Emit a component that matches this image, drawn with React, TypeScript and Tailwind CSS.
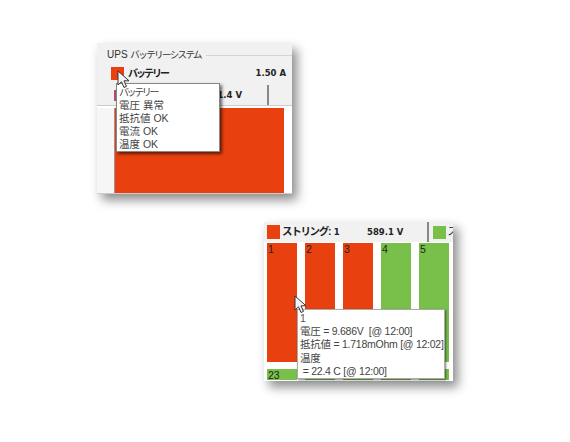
const font = "font-['Liberation_Sans','Noto_Sans_CJK_JP',sans-serif]";
const num = "font-['DejaVu_Sans',sans-serif] font-bold text-[8.5px] text-[#222] tracking-normal whitespace-nowrap";

const red = "bg-[#e8410f]";
const green = "bg-[#78c04a]";

function Cursor({ className }: { className: string }) {
  return (
    <svg className={className} width="14" height="19" viewBox="0 0 14 19">
      <path d="M1 1 L1 15 L4.5 11.8 L7 17.5 L9.5 16.4 L7 10.8 L12 10.8 Z" fill="#f4f4f4" stroke="#333" strokeWidth="1" strokeLinejoin="round" />
    </svg>
  );
}

const barsTop = [
  { n: 1, color: red },
  { n: 2, color: red },
  { n: 3, color: red },
  { n: 4, color: green },
  { n: 5, color: green },
];

export default function App() {
  return (
    <div className={`w-[570px] h-[442px] bg-white overflow-hidden pt-[43px] ${font}`}>
      {/* battery system panel */}
      <div className="relative ml-[97px] w-[195px] h-[151px] bg-white shadow-[5px_6px_10px_rgba(0,0,0,0.45)]">
        <div className="bg-[#f1f1f1] h-[62px]">
          <div className="flex items-center h-[22px] pl-[10px] pt-[2px]">
            <span className="text-[10px] leading-none text-[#333] whitespace-nowrap">UPS <span className="text-[9.5px] tracking-[-1.6px]">バッテリーシステム</span></span>
            <div className="ml-[5px] flex-1 h-px bg-[#d4d4d4]" />
          </div>
          <div className="flex items-center h-[15px] pl-[14px] pr-[6px] mt-[1px]">
            <div className={`w-[13px] h-[13px] shrink-0 ${red}`} />
            <span className="ml-[4px] text-[10px] font-bold text-[#222] tracking-[-2px] whitespace-nowrap">バッテリー</span>
            <span className={`ml-auto ${num}`}>1.50 A</span>
          </div>
          <div className="flex items-center ml-[17px] mt-[4px] w-[155px] h-[20px] border-r-2 border-[#888] pr-[25px]">
            <div className={`w-[13px] h-[11px] ${red} border-l border-[#8a5ab0]`} />
            <span className={`ml-auto ${num}`}>1.4 V</span>
          </div>
        </div>
        <div className="h-[3px] bg-white border-t border-[#ccc]" />
        <div className="flex h-[85px]">
          <div className="w-[17px] bg-[#f6f6f6]" />
          <div className={`w-[170px] ${red} border-l border-[#999]`} />
        </div>
        <div className="h-px bg-[#ccc]" />

        <div className="absolute left-[19px] top-[40px] w-[104px] h-[69px] bg-white border border-[#888] shadow-[2px_2px_3px_rgba(0,0,0,0.6)] pl-[2px] pt-[2px] text-[10.5px] leading-[13px] text-[#444] whitespace-nowrap">
          <div className="text-[10px] tracking-[-2.4px]">バッテリー</div>
          <div>電圧 異常</div>
          <div>抵抗値 OK</div>
          <div>電流 OK</div>
          <div>温度 OK</div>
        </div>
        <Cursor className="absolute left-[20px] top-[27px]" />
      </div>

      {/* string panel */}
      <div className="relative ml-[264px] mt-[28px] w-[189px] h-[159px] bg-white shadow-[5px_6px_10px_rgba(0,0,0,0.45)]">
        <div className="flex items-center h-[20px] bg-[#f1f1f1] pl-[3px] overflow-hidden">
          <div className={`w-[13px] h-[14px] shrink-0 ${red}`} />
          <span className="ml-[2px] w-[85px] shrink-0 text-[10.5px] font-bold text-[#222] tracking-[-1.3px] whitespace-nowrap">ストリング: <span className={`${num} ml-[2px]`}>1</span></span>
          <span className={num}>589.1 V</span>
          <div className="ml-[24px] w-[2px] h-[20px] shrink-0 bg-[#888]" />
          <div className={`ml-[4px] w-[13px] h-[13px] shrink-0 ${green}`} />
          <span className="ml-[1px] text-[10.5px] text-[#222]">ス</span>
        </div>
        <div className="flex gap-[8px] pl-[3px] pt-[1px]">
          {barsTop.map((b) => (
            <div key={b.n} className={`w-[30px] h-[119px] ${b.color} text-[10.5px] leading-[13px] pl-[1px] text-[#222]`}>{b.n}</div>
          ))}
        </div>
        <div className="flex gap-[8px] pl-[3px] pt-[7px]">
          {barsTop.map((b, i) => (
            <div key={b.n} className={`w-[30px] h-[11px] ${green} text-[10.5px] leading-[12px] pl-[1px] text-[#222]`}>{i === 0 ? "23" : ""}</div>
          ))}
        </div>

        <div className="absolute left-[33px] top-[87px] w-[148px] h-[70px] bg-white border border-[#aaa] shadow-[1px_1px_2px_rgba(0,0,0,0.5)] pl-[2px] pt-[2px] text-[10.5px] leading-[13.2px] tracking-[-0.25px] text-[#444] whitespace-nowrap">
          <div className="text-[#555]">1</div>
          <div>電圧 = 9.686V &nbsp;[@ 12:00]</div>
          <div>抵抗値 = 1.718mOhm [@ 12:02]</div>
          <div>温度</div>
          <div>&nbsp;= 22.4 C [@ 12:00]</div>
        </div>
        <Cursor className="absolute left-[30px] top-[73px]" />
      </div>
    </div>
  );
}
